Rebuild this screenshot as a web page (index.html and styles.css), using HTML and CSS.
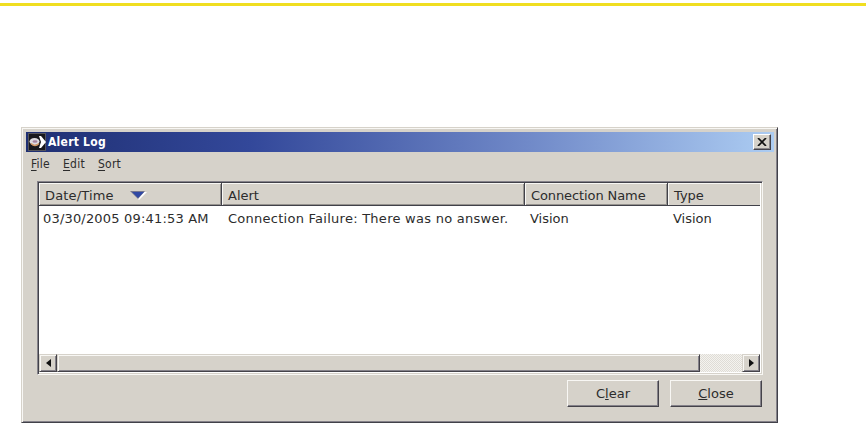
FILE: index.html
```html
<!DOCTYPE html>
<html lang="en">
<head>
    <meta charset="UTF-8">
    <title>Alert Log</title>
    <link rel="stylesheet" href="styles.css">
</head>
<body>
    <div class="page-rule"></div>
    <div class="window">
        <div class="titlebar">
            <svg class="app-icon" width="18" height="18" viewBox="0 0 18 18">
                <rect width="18" height="18" fill="#55555c"/>
                <rect x="1" y="1" width="16" height="16" fill="#18181d"/>
                <ellipse cx="6.500" cy="8.500" rx="5" ry="3.500" fill="#dedbe0"/>
                <path d="M3 10.500q4 4 8 0" fill="none" stroke="#d69a68" stroke-width="1.500"/>
                <ellipse cx="7" cy="8.500" rx="2.500" ry="1.200" fill="#a583a0"/>
                <path d="M11 3h2l5 6-5 6h-2l2-6z" fill="#fff"/>
            </svg>
            <span class="title">Alert Log</span>
            <button class="close-box" aria-label="Close window">
                <svg width="10" height="8" viewBox="0 0 10 8">
                    <path d="M1 0l8 8M9 0L1 8" stroke="#111" stroke-width="1.700"/>
                </svg>
            </button>
        </div>
        <div class="menubar">
            <span><u>F</u>ile</span>
            <span><u>E</u>dit</span>
            <span><u>S</u>ort</span>
        </div>
        <div class="list">
            <div class="row header">
                <div class="cell date">Date/Time
                    <svg class="sort-arrow" width="17" height="9" viewBox="0 0 17 9">
                        <path d="M2 1h15L9 9z" fill="#fff"/>
                        <path d="M0 0h15L8 8z" fill="#77788f"/>
                        <path d="M2 1h12L8 7z" fill="#3048a4"/>
                    </svg>
                </div>
                <div class="cell alert">Alert</div>
                <div class="cell name">Connection Name</div>
                <div class="cell type">Type</div>
            </div>
            <div class="row entry">
                <div class="cell date">03/30/2005 09:41:53 AM</div>
                <div class="cell alert">Connection Failure: There was no answer.</div>
                <div class="cell name">Vision</div>
                <div class="cell type">Vision</div>
            </div>
            <div class="scrollbar">
                <div class="scroll-button">
                    <svg width="5" height="8" viewBox="0 0 5 8"><path d="M5 0v8L0 4z" fill="#111"/></svg>
                </div>
                <div class="thumb"></div>
                <div class="track"></div>
                <div class="scroll-button">
                    <svg width="5" height="8" viewBox="0 0 5 8"><path d="M0 0v8l5-4z" fill="#111"/></svg>
                </div>
            </div>
        </div>
        <div class="actions">
            <button class="action">C<u>l</u>ear</button>
            <button class="action"><u>C</u>lose</button>
        </div>
    </div>
</body>
</html>
```
FILE: styles.css
```css
* {
    box-sizing: border-box;
}
body {
    margin: 0;
    height: 423px;
    overflow: hidden;
    background: #fff;
    font-family: "DejaVu Sans", sans-serif;
    color: #2c2c2c;
}
u {
    text-underline-offset: 2px;
    text-decoration-thickness: 1px;
    text-decoration-skip-ink: none;
}
.page-rule {
    height: 3px;
    margin-top: 3px;
    background: #f0de20;
}
.window {
    width: 757px;
    height: 296px;
    margin: 121px 0 0 21px;
    padding: 3px 2px 0 3px;
    background: #d6d2ca;
    border: 1px solid;
    border-color: #d6d2ca #414149 #414149 #d6d2ca;
    box-shadow: inset 1px 1px #f8f7f4, inset -1px -1px #85828a;
}
.titlebar {
    display: flex;
    align-items: center;
    height: 20px;
    margin: 1px 1px 1px;
    padding: 0 3px 0 2px;
    background: linear-gradient(to right, #1f2f72, #33489a 30%, #7089c8 67%, #acccf2);
}
.title {
    margin-left: 2px;
    color: #fff;
    font-family: "DejaVu Sans Condensed", sans-serif;
    font-size: 12px;
    font-weight: bold;
    letter-spacing: 0.25px;
}
.close-box {
    display: flex;
    align-items: center;
    justify-content: center;
    width: 18px;
    height: 16px;
    margin-left: auto;
    padding: 0;
    background: #d6d2ca;
    border: 1px solid;
    border-color: #fff #45434a #45434a #fff;
    box-shadow: inset -1px -1px #8b888a;
}
.menubar {
    display: flex;
    gap: 13px;
    height: 28px;
    padding: 4px 0 0 6px;
    font-family: "DejaVu Sans Condensed", sans-serif;
    font-size: 12px;
    line-height: 15px;
    letter-spacing: 0.25px;
}
.list {
    display: flex;
    flex-direction: column;
    width: 726px;
    height: 194px;
    margin-left: 12px;
    background: #fff;
    border: 1px solid;
    border-color: #85828a #f8f7f4 #f8f7f4 #85828a;
    box-shadow: inset 1px 1px #414149, inset -1px -1px #d6d2ca;
    padding: 1px;
    font-size: 13px;
}
.row {
    display: grid;
    grid-template-columns: 183px 303px 143px 1fr;
    white-space: nowrap;
}
.header {
    height: 23px;
    margin-right: 1px;
    background: #d6d2ca;
    border-bottom: 1px solid #414149;
    line-height: 26px;
}
.header .cell {
    height: 22px;
    padding-left: 6px;
    border-right: 1px solid #414149;
    box-shadow: inset 1px 1px #f8f7f4, inset -1px -1px #96938f;
}
.header .date {
    letter-spacing: 0.15px;
}
.header .name {
    letter-spacing: -0.1px;
}
.header .type {
    border-right: 0;
    box-shadow: inset 1px 1px #f8f7f4;
}
.sort-arrow {
    margin-left: 12px;
}
.entry {
    line-height: 25px;
}
.entry .cell {
    padding-left: 6px;
}
.entry .date {
    padding-left: 4px;
    letter-spacing: 0.18px;
}
.entry .alert {
    letter-spacing: 0.26px;
}
.entry .name,
.entry .type {
    padding-left: 5px;
}
.scrollbar {
    display: flex;
    height: 18px;
    margin: auto 1px 1px 0;
}
.scroll-button {
    display: flex;
    align-items: center;
    justify-content: center;
    width: 18px;
}
.scroll-button,
.thumb {
    background: #d6d2ca;
    border: 1px solid;
    border-color: #d6d2ca #45434a #45434a #d6d2ca;
    box-shadow: inset 1px 1px #f8f7f4, inset -1px -1px #85828a;
}
.thumb {
    width: 643px;
}
.track {
    flex: 1;
    background: repeating-conic-gradient(#f4f3ef 0 25%, #dfdcd6 0 50%) 0 0 / 2px 2px;
}
.actions {
    display: flex;
    justify-content: flex-end;
    gap: 11px;
    margin-top: 5px;
    padding-right: 13px;
}
.action {
    width: 92px;
    height: 27px;
    padding: 0;
    background: #d6d2ca;
    border: 1px solid;
    border-color: #f8f7f4 #45434a #45434a #f8f7f4;
    box-shadow: inset -1px -1px #85828a;
    color: #2c2c2c;
    font-family: inherit;
    font-size: 13px;
}
.action u {
    text-underline-offset: 1px;
}
```
